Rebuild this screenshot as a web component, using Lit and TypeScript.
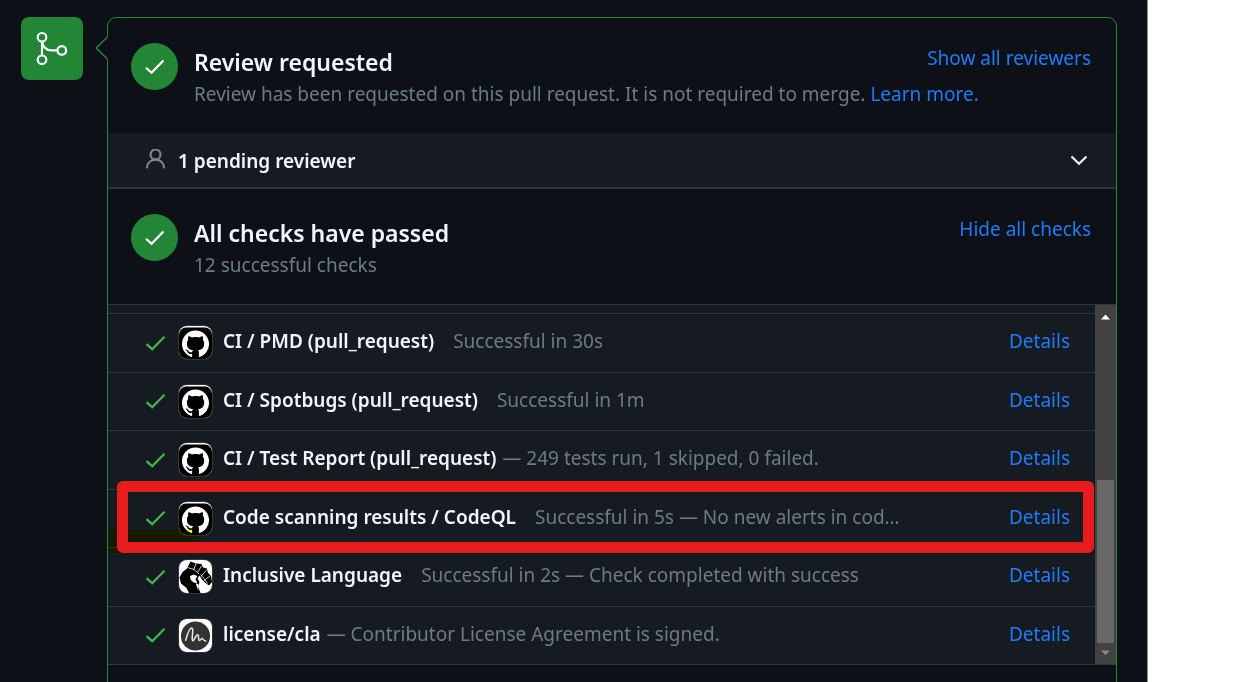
import { LitElement, html, svg, css, nothing } from "lit";
import { customElement, property } from "lit/decorators.js";

type Avatar = "github" | "fist" | "cla";

interface Check {
  name: string;
  status?: string;
  note?: string;
  avatar: Avatar;
  marked?: boolean;
}

const CHECKS: Check[] = [
  { name: "CI / PMD (pull_request)", status: "Successful in 30s", avatar: "github" },
  { name: "CI / Spotbugs (pull_request)", status: "Successful in 1m", avatar: "github" },
  { name: "CI / Test Report (pull_request)", note: "— 249 tests run, 1 skipped, 0 failed.", avatar: "github" },
  { name: "Code scanning results / CodeQL", status: "Successful in 5s — No new alerts in cod…", avatar: "github", marked: true },
  { name: "Inclusive Language", status: "Successful in 2s — Check completed with success", avatar: "fist" },
  { name: "license/cla", note: "— Contributor License Agreement is signed.", avatar: "cla" },
];

const ART = {
  github: svg`
    <rect width="33" height="33" fill="#fff"/>
    <rect x="0" y="1.6" width="33" height="34" rx="7" fill="#000"/>
    <g transform="translate(3 4.6) scale(1.69)"><path fill="#fff" d="M8 0C3.58 0 0 3.58 0 8c0 3.54 2.29 6.53 5.47 7.59.4.07.55-.17.55-.38 0-.19-.01-.82-.01-1.49-2.01.37-2.53-.49-2.69-.94-.09-.23-.48-.94-.82-1.13-.28-.15-.68-.52-.01-.53.63-.01 1.08.58 1.23.82.72 1.21 1.87.87 2.33.66.07-.52.28-.87.51-1.07-1.78-.2-3.64-.89-3.64-3.95 0-.87.31-1.59.82-2.15-.08-.2-.36-1.02.08-2.12 0 0 .67-.21 2.2.82.64-.18 1.32-.27 2-.27s1.36.09 2 .27c1.53-1.04 2.2-.82 2.2-.82.44 1.1.16 1.92.08 2.12.51.56.82 1.27.82 2.15 0 3.07-1.87 3.75-3.65 3.95.29.25.54.73.54 1.48 0 1.07-.01 1.93-.01 2.2 0 .21.15.46.55.38A8.01 8.01 0 0 0 16 8c0-4.42-3.58-8-8-8Z"/></g>`,
  fist: svg`
    <rect width="33" height="33" fill="#fff"/>
    <path fill="#000" d="M11.500 1.500 17 3.400 22.500 4 24 7.500 28 8.500 29 13 32 15.500 33 22 30 25.500 26.500 23 23 19.500 20.500 15.500 18.500 18.500 20.500 22 19 26 21.500 33H10L7.500 28 2 23.500 .500 17.500 3.500 12 8 8.500Z"/>
    <path fill="#fff" d="M11 16 14.500 14.500 18.500 16 16.500 19 18 22 17 24.500 19.500 31 19 24 14 22 11.500 19.500Z"/>
    <path fill="none" stroke="#fff" stroke-width=".8" d="M17 3.400 14.600 10M8.500 7.500 15 9.500 20 14M22.500 6 18.500 12.500M28 9.500 22 16.500M31.500 15.500 25 20.500M21.500 14.500 25 18.500 28.500 23.500"/>`,
  cla: svg`
    <rect width="33" height="33" fill="#fff"/>
    <circle cx="16.500" cy="17" r="14.6" fill="#333"/>
    <path d="M6.600 21.400C8 16.500 10.200 9 12.600 9c2.800 0-.8 12.800 1.200 12.800 1.600 0 3-6 4.800-6 1.600 0 .2 5.400 1.800 5.600 1.200.2 1.800-2.200 3-2 1 .2.600 2.800 3.400 2.600" fill="none" stroke="#e8e8e8" stroke-width="1.500" stroke-linecap="round"/>`,
};

@customElement("badge-check")
class BadgeCheck extends LitElement {
  static styles = css`
    :host { display: block; flex: none; }
    svg { display: block; }
  `;
  render() {
    return html`<svg width="47" height="47" viewBox="0 0 47 47" aria-hidden="true">
      <circle cx="23.500" cy="23.500" r="23.500" fill="#238636"/>
      <path d="M15 24.700 20.600 29.700 32.400 17.400" fill="none" stroke="#fff" stroke-width="2.200"/>
    </svg>`;
  }
}

@customElement("check-row")
class CheckRow extends LitElement {
  @property({ attribute: false }) check!: Check;

  static styles = css`
    :host {
      position: relative;
      display: flex;
      align-items: center;
      padding: 0 25px 0 37px;
      border-bottom: 1px solid #30363d;
    }
    svg { display: block; flex: none; }
    .avatar {
      margin: 0 11px 0 12px;
      border-radius: 8px;
      overflow: hidden;
      box-shadow: 0 0 0 1px #30363d;
    }
    .text {
      flex: 1;
      min-width: 0;
      padding-bottom: 3px;
      white-space: nowrap;
      overflow: hidden;
      text-overflow: ellipsis;
      color: #6c7b86;
    }
    .name { color: #f0f6fc; font-weight: 600; }
    .status { margin-left: 19px; }
    .note { margin-left: 6px; }
    a { color: #1f7bf8; text-decoration: none; padding-bottom: 3px; }
    .highlight {
      position: absolute;
      left: 1px;
      bottom: -6px;
      width: 90px;
      height: 23px;
      background: #ffff00;
      mix-blend-mode: multiply;
    }
    .frame {
      position: absolute;
      inset: -9px 1px -6px 9px;
      border: 11px solid #e71d1d;
      border-radius: 6px;
      pointer-events: none;
    }
  `;

  render() {
    const c = this.check;
    return html`
      <svg width="22" height="22" viewBox="0 0 22 22" aria-hidden="true">
        <path d="M1.500 12.200 7.200 17.200 19.500 4.800" fill="none" stroke="#3fb950" stroke-width="2.200"/>
      </svg>
      <svg class="avatar" width="33" height="33" viewBox="0 0 33 33" aria-hidden="true">${ART[c.avatar]}</svg>
      <div class="text"><span class="name">${c.name}</span>${c.status
        ? html`<span class="status">${c.status}</span>`
        : html`<span class="note">${c.note}</span>`}</div>
      <a href="#details">Details</a>
      ${c.marked ? html`<div class="highlight"></div><div class="frame"></div>` : nothing}
    `;
  }
}

@customElement("app-root")
class AppRoot extends LitElement {
  static styles = css`
    :host {
      display: flex;
      height: 100vh;
      overflow: hidden;
      background: #fff;
      font: 19px/26px "Noto Sans", "Open Sans", sans-serif;
      color: #f0f6fc;
    }
    .page {
      flex: 1;
      display: flex;
      align-items: flex-start;
      gap: 24px;
      padding: 17px 30px 0 21px;
      margin-right: 91px;
      background: #0d1117;
      border-right: 1px solid #8b8d90;
    }
    .merge {
      display: block;
      flex: none;
      border-radius: 8px;
      background: #238636;
    }
    .panel {
      position: relative;
      flex: 1;
      min-width: 0;
      min-height: 100vh;
      border: 1px solid #238636;
      border-radius: 9px;
    }
    .pointer { position: absolute; left: -13px; top: 17px; }
    .section {
      display: flex;
      align-items: flex-start;
      gap: 16px;
      padding: 25px 25px 26px 23px;
    }
    .body { flex: 1; min-width: 0; }
    .head {
      display: flex;
      align-items: flex-start;
      justify-content: space-between;
    }
    h2 { margin: 0; font-size: 23px; line-height: 38px; font-weight: 600; }
    p { margin: 0; color: #6c7b86; }
    a { color: #1f7bf8; text-decoration: none; }
    .side { margin-top: 2px; }
    .band {
      box-sizing: border-box;
      width: 100%;
      display: flex;
      align-items: center;
      gap: 12px;
      padding: 15px 26px 13px 36px;
      border: 0;
      border-bottom: 2px solid #30363d;
      background: #161b22;
      color: inherit;
      font: inherit;
      font-weight: 600;
      text-align: left;
    }
    .band span { flex: 1; }
    .scroller {
      display: flex;
      height: 360px;
      border-top: 1px solid #30363d;
      background: #161b22;
    }
    .list { flex: 1; min-width: 0; display: flex; flex-direction: column; }
    .peek { height: 8px; border-bottom: 1px solid #30363d; }
    .rows { flex: 1; display: grid; grid-auto-rows: 1fr; }
    .bar {
      width: 21px;
      display: flex;
      flex-direction: column;
      align-items: center;
      justify-content: space-between;
      border-bottom: 1px solid #30363d;
      background: #424242;
    }
    .thumb { width: 17px; height: 163px; margin-top: auto; background: #686868; }
    .bar svg { display: block; }
  `;

  render() {
    return html`
      <div class="page">
        <svg class="merge" width="62" height="63" viewBox="0 0 62 63" aria-hidden="true">
          <g fill="none" stroke="#fff" stroke-width="2.200">
            <circle cx="21" cy="20.300" r="4.300"/>
            <circle cx="21" cy="42.800" r="4.300"/>
            <circle cx="40.800" cy="33.400" r="4.300"/>
            <path d="M21 24.500V38.800M21 24.500c1 5.500 4.500 8.900 9.500 8.900h6.300"/>
          </g>
        </svg>
        <main class="panel">
          <svg class="pointer" width="13" height="26" viewBox="0 0 13 26" aria-hidden="true">
            <path d="M13 1.500 1.200 13 13 24.500Z" fill="#0d1117"/>
            <path d="M12.500 2 1.200 13 12.500 24" fill="none" stroke="#238636" stroke-width="1.500"/>
          </svg>
          <section class="section">
            <badge-check></badge-check>
            <div class="body">
              <div class="head">
                <h2>Review requested</h2>
                <a class="side" href="#reviewers">Show all reviewers</a>
              </div>
              <p>Review has been requested on this pull request. It is not required to merge. <a href="#learn">Learn more.</a></p>
            </div>
          </section>
          <button class="band">
            <svg width="22" height="24" viewBox="0 0 22 24" aria-hidden="true">
              <g fill="none" stroke="#7c8290" stroke-width="2.200" stroke-linecap="round">
                <circle cx="11.500" cy="5.500" r="5"/>
                <path d="M3 18.500c.5-4.800 4-7.800 8.500-7.800S19.500 13.700 20 18.500"/>
              </g>
            </svg>
            <span>1 pending reviewer</span>
            <svg width="22" height="22" viewBox="0 0 22 22" aria-hidden="true">
              <path d="M3.500 6.500 11 13.700 18.500 6.500" fill="none" stroke="#f0f6fc" stroke-width="2.200"/>
            </svg>
          </button>
          <section class="section">
            <badge-check></badge-check>
            <div class="body">
              <div class="head">
                <h2>All checks have passed</h2>
                <a class="side" href="#hide">Hide all checks</a>
              </div>
              <p>12 successful checks</p>
            </div>
          </section>
          <div class="scroller">
            <div class="list">
              <div class="peek"></div>
              <div class="rows">${CHECKS.map((c) => html`<check-row .check=${c}></check-row>`)}</div>
            </div>
            <div class="bar">
              <svg width="21" height="22" viewBox="0 0 21 22" aria-hidden="true"><path d="M6 14.500 10.500 9.500 15 14.500Z" fill="#fff"/></svg>
              <div class="thumb"></div>
              <svg width="21" height="21" viewBox="0 0 21 21" aria-hidden="true"><path d="M6 7.500H15L10.500 12Z" fill="#8a8a8a"/></svg>
            </div>
          </div>
        </main>
      </div>
    `;
  }
}
